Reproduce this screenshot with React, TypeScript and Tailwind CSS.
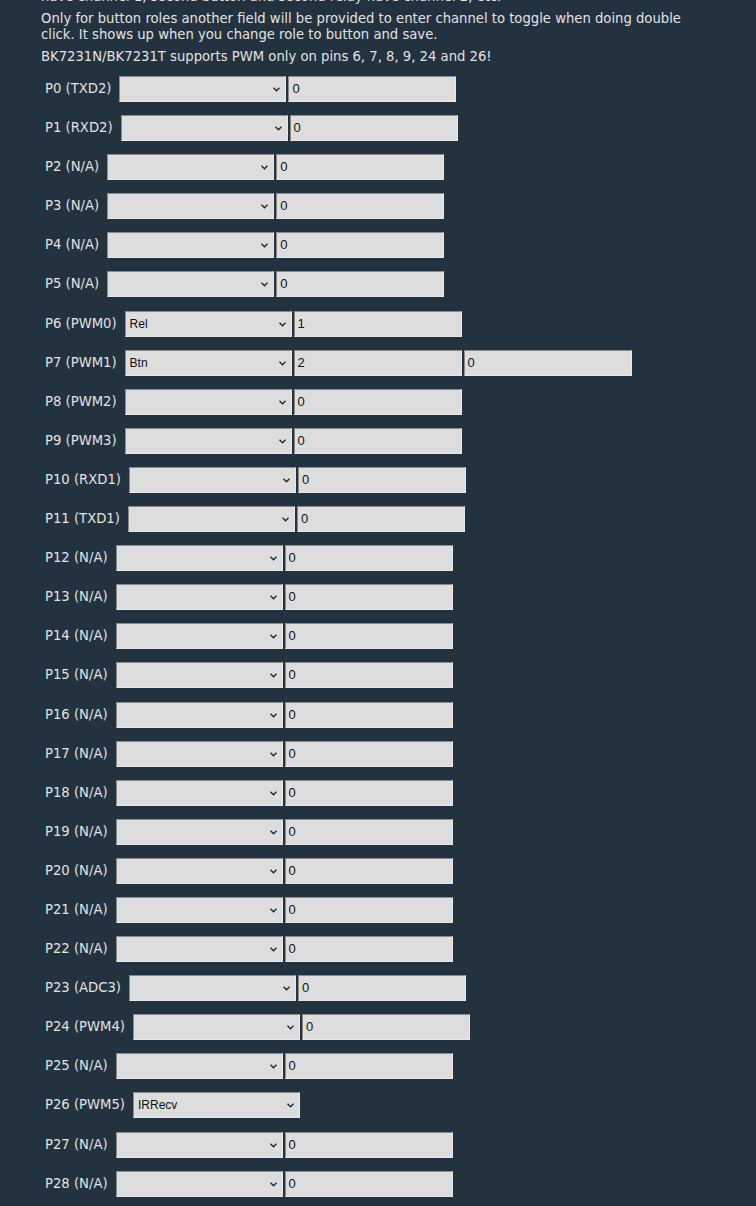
import React from "react";

type Row = { pin: string; fn: string; role?: string; ch?: string; ch2?: string; noInput?: boolean };

const rows: Row[] = [
  { pin: "P0", fn: "TXD2" },
  { pin: "P1", fn: "RXD2" },
  { pin: "P2", fn: "N/A" },
  { pin: "P3", fn: "N/A" },
  { pin: "P4", fn: "N/A" },
  { pin: "P5", fn: "N/A" },
  { pin: "P6", fn: "PWM0", role: "Rel", ch: "1" },
  { pin: "P7", fn: "PWM1", role: "Btn", ch: "2", ch2: "0" },
  { pin: "P8", fn: "PWM2" },
  { pin: "P9", fn: "PWM3" },
  { pin: "P10", fn: "RXD1" },
  { pin: "P11", fn: "TXD1" },
  { pin: "P12", fn: "N/A" },
  { pin: "P13", fn: "N/A" },
  { pin: "P14", fn: "N/A" },
  { pin: "P15", fn: "N/A" },
  { pin: "P16", fn: "N/A" },
  { pin: "P17", fn: "N/A" },
  { pin: "P18", fn: "N/A" },
  { pin: "P19", fn: "N/A" },
  { pin: "P20", fn: "N/A" },
  { pin: "P21", fn: "N/A" },
  { pin: "P22", fn: "N/A" },
  { pin: "P23", fn: "ADC3" },
  { pin: "P24", fn: "PWM4" },
  { pin: "P25", fn: "N/A" },
  { pin: "P26", fn: "PWM5", role: "IRRecv", noInput: true },
  { pin: "P27", fn: "N/A" },
  { pin: "P28", fn: "N/A" },
];

function FakeSelect({ value }: { value?: string }) {
  return (
    <div className="relative flex h-[26px] w-[167px] shrink-0 items-center border-t border-l border-t-[#8a8a8a] border-l-[#8a8a8a] border-b border-r border-b-[#e8e8e8] border-r-[#e8e8e8] bg-[#dddddd] pl-[4px] text-[12px] text-[#111] [font-family:'Liberation_Sans',Arial,sans-serif]">
      <span>{value ?? ""}</span>
      <svg className="absolute right-[5px] top-[10px]" width="7" height="5" viewBox="0 0 7 5">
        <path d="M0.5 0.8 L3.5 3.8 L6.5 0.8" fill="none" stroke="#222" strokeWidth="1.3" />
      </svg>
    </div>
  );
}

function FakeInput({ value }: { value: string }) {
  return (
    <div className="flex h-[26px] w-[168px] shrink-0 items-center border-t border-l border-t-[#8a8a8a] border-l-[#8a8a8a] border-b border-r border-b-[#e8e8e8] border-r-[#e8e8e8] bg-[#dddddd] pl-[3px] text-[13px] text-[#111] [font-family:'Liberation_Sans',Arial,sans-serif]">
      {value}
    </div>
  );
}

export default function App() {
  return (
    <div className="min-h-[1206px] overflow-hidden bg-[#22323f] pl-[41px] text-[13.2px] leading-[16px] text-[#e2e2e2] [font-family:'DejaVu_Sans',Verdana,sans-serif]">
      <p className="mt-[-11px] whitespace-nowrap">have channel 1, second button and second relay have channel 2, etc.</p>
      <p className="mt-[6px] w-[650px]">
        Only for button roles another field will be provided to enter channel to toggle when doing double click. It shows up when you change role to button and save.
      </p>
      <p className="mt-[6px]">BK7231N/BK7231T supports PWM only on pins 6, 7, 8, 9, 24 and 26!</p>
      <div className="mt-[11px] flex flex-col gap-[13.1px] pl-[4px]">
        {rows.map((r) => (
          <div key={r.pin} className="flex items-center">
            <span className="mr-[8px] whitespace-nowrap">
              {r.pin} ({r.fn})
            </span>
            <FakeSelect value={r.role} />
            {!r.noInput && (
              <div className="ml-[2px]">
                <FakeInput value={r.ch ?? "0"} />
              </div>
            )}
            {r.ch2 !== undefined && (
              <div className="ml-[2px]">
                <FakeInput value={r.ch2} />
              </div>
            )}
          </div>
        ))}
      </div>
    </div>
  );
}
